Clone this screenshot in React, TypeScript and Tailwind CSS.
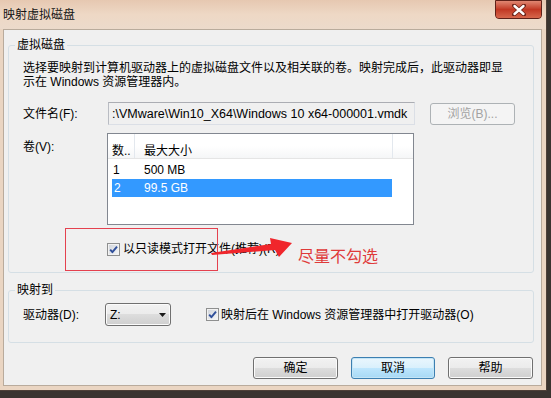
import React from "react";

function Check() {
  return (
    <span className="w-[13px] h-[13px] shrink-0 border border-[#8e8f8f] bg-[linear-gradient(135deg,#cfd3da_0%,#f6f7f8_100%)] shadow-[inset_0_0_0_1px_#f2f2f2] flex">
      <svg width="11" height="11" viewBox="0 0 11 11" className="block">
        <path d="M2.2 5.6 L4.4 8.2 L9 2.6" fill="none" stroke="#2f4f9a" strokeWidth="1.9" strokeLinejoin="round" />
      </svg>
    </span>
  );
}

function Btn({ children, focus }: { children: React.ReactNode; focus?: boolean }) {
  return (
    <div
      className={
        focus
          ? "w-[84px] h-[22px] rounded-[3px] border border-[#3c7fb1] bg-[linear-gradient(180deg,#eaf6fd_0%,#d9f0fc_50%,#bee6fd_50%,#a7d9f5_100%)] shadow-[inset_0_0_0_1px_#c4e5f6] flex items-center justify-center"
          : "w-[85px] h-[22px] rounded-[3px] border border-[#707070] bg-[linear-gradient(180deg,#f2f2f2_0%,#ebebeb_50%,#dddddd_50%,#cfcfcf_100%)] shadow-[inset_0_0_0_1px_#fbfbfb] flex items-center justify-center"
      }
    >
      {children}
    </div>
  );
}

export default function App() {
  return (
    <div className="relative w-[551px] h-[398px] overflow-hidden bg-[#3a3430] font-['Liberation_Sans','Noto_Sans_CJK_SC',sans-serif] text-[12px] leading-[14px] text-black">
      {/* window */}
      <div className="w-[547px] h-[391px] border-r border-b border-[#4e4038] bg-[#ead5c2] flex flex-col">
        {/* title bar */}
        <div className="h-[29px] shrink-0 flex justify-between items-start bg-linear-to-b from-[#e6c8b1] via-[#eed8c5] to-[#ecdacb]">
          <span className="pl-[3px] pt-[8px] text-[#141414]">映射虚拟磁盘</span>
          <div className="mr-[4px] w-[47px] h-[19px] rounded-b-[4px] border border-[#5e2119] bg-[#c9432e] flex items-center justify-center">
            <div className="w-[45px] h-[17px] rounded-b-[3px] bg-linear-to-b from-[#e08672] via-[#c13723] to-[#d6664b] flex items-center justify-center">
              <svg width="14" height="12" viewBox="0 0 14 12">
                <path d="M2 1.5 L12 10.5 M12 1.5 L2 10.5" stroke="#6a2117" strokeWidth="4" strokeLinecap="round" />
                <path d="M2.5 2 L11.5 10 M11.5 2 L2.5 10" stroke="#ffffff" strokeWidth="2.4" strokeLinecap="round" />
              </svg>
            </div>
          </div>
        </div>

        {/* body row */}
        <div className="flex-1 flex pl-[3px] pr-[4px] pb-[4px]">
          <div className="flex-1 bg-[#f0f0f0] border border-[#b9ab9c] flex flex-col pl-[4px] pr-[7px]">
            {/* group 1 */}
            <fieldset className="mt-[8px] border border-[#d5dfe5] rounded-[3px] pl-[6px] pr-[8px] pb-[16px]">
              <legend className="px-[2px] leading-[14px]">虚拟磁盘</legend>
              <div className="pl-[8px] flex flex-col">
                <p className="mt-[9px] leading-[14px] whitespace-nowrap">
                  选择要映射到计算机驱动器上的虚拟磁盘文件以及相关联的卷。映射完成后，此驱动器即显
                  <br />
                  示在 Windows 资源管理器内。
                </p>
                <div className="mt-[13px] h-[23px] flex items-center">
                  <span className="w-[85px] shrink-0">文件名(F):</span>
                  <div className="w-[307px] h-[23px] shrink-0 border border-[#dbdfe6] border-t-[#abadb3] border-l-[#b9bcc3] bg-[#f0f0f0] flex items-center pl-[3px] overflow-hidden whitespace-nowrap text-[12.5px]">
                    :\VMware\Win10_X64\Windows 10 x64-000001.vmdk
                  </div>
                  <div className="ml-[15px] w-[85px] h-[22px] rounded-[3px] border border-[#adb2b5] bg-[#f4f4f4] text-[#a3a3a3] flex items-center justify-center">
                    浏览(B)...
                  </div>
                </div>
                <div className="mt-[8px] flex items-start">
                  <span className="w-[84px] shrink-0 pt-[7px]">卷(V):</span>
                  <div className="w-[307px] h-[92px] shrink-0 border border-[#828790] bg-white flex flex-col">
                    <div className="h-[25px] flex border-b border-[#e5e5e5] bg-[linear-gradient(180deg,#ffffff_0%,#ffffff_50%,#f5f6f7_100%)]">
                      <div className="w-[27px] border-r border-[#e3e8ee] pl-[4px] pt-[10px] whitespace-nowrap overflow-hidden">数..</div>
                      <div className="w-[258px] border-r border-[#e3e8ee] pl-[9px] pt-[10px]">最大大小</div>
                      <div className="flex-1" />
                    </div>
                    <div className="mt-[2px] pl-[4px] flex flex-col">
                      <div className="w-[280px] h-[18px] flex items-center">
                        <span className="w-[32px] pl-[1px]">1</span>
                        <span>500 MB</span>
                      </div>
                      <div className="w-[280px] h-[18px] flex items-center bg-[#3399ff] text-white">
                        <span className="w-[32px] pl-[2px]">2</span>
                        <span>99.5 GB</span>
                      </div>
                    </div>
                  </div>
                </div>
                <div className="mt-[17px] h-[14px] flex items-center pl-[84px] gap-[3px] whitespace-nowrap">
                  <Check />
                  <span>以只读模式打开文件(推荐)(R)</span>
                </div>
              </div>
            </fieldset>

            {/* group 2 */}
            <fieldset className="mt-[10px] border border-[#d5dfe5] rounded-[3px] pl-[6px] pr-[8px] pb-[16px]">
              <legend className="px-[2px] leading-[14px]">映射到</legend>
              <div className="pl-[8px] mt-[6px] h-[23px] flex items-center whitespace-nowrap">
                <span className="w-[82px] shrink-0">驱动器(D):</span>
                <div className="w-[66px] h-[23px] shrink-0 rounded-[3px] border border-[#707070] bg-[linear-gradient(180deg,#f2f2f2_0%,#ebebeb_50%,#dddddd_50%,#cfcfcf_100%)] shadow-[inset_0_0_0_1px_#fbfbfb] flex items-center justify-between pl-[4px] pr-[4px]">
                  <span>Z:</span>
                  <svg width="7" height="4" viewBox="0 0 7 4">
                    <path d="M0 0 H7 L3.5 4 Z" fill="#1a1a1a" />
                  </svg>
                </div>
                <div className="ml-[35px] flex items-center gap-[2px]">
                  <Check />
                  <span>映射后在 Windows 资源管理器中打开驱动器(O)</span>
                </div>
              </div>
            </fieldset>

            {/* buttons */}
            <div className="mt-[14px] flex justify-end gap-[13px] pr-[1px]">
              <Btn>确定</Btn>
              <Btn focus>取消</Btn>
              <Btn>帮助</Btn>
            </div>
          </div>
        </div>
      </div>

      {/* annotations */}
      <div className="absolute left-[65px] top-[228px] w-[153px] h-[43px] border border-[#e4414f]" />
      <svg className="absolute left-0 top-0 pointer-events-none" width="551" height="398" viewBox="0 0 551 398">
        <polygon points="211,253 271,244 270,238 292,243 279,257 275,250 212,255" fill="#f0262c" />
      </svg>
      <div className="absolute left-[298px] top-[248px] text-[16px] leading-[18px] text-[#df3a3a] whitespace-nowrap">尽量不勾选</div>
    </div>
  );
}
